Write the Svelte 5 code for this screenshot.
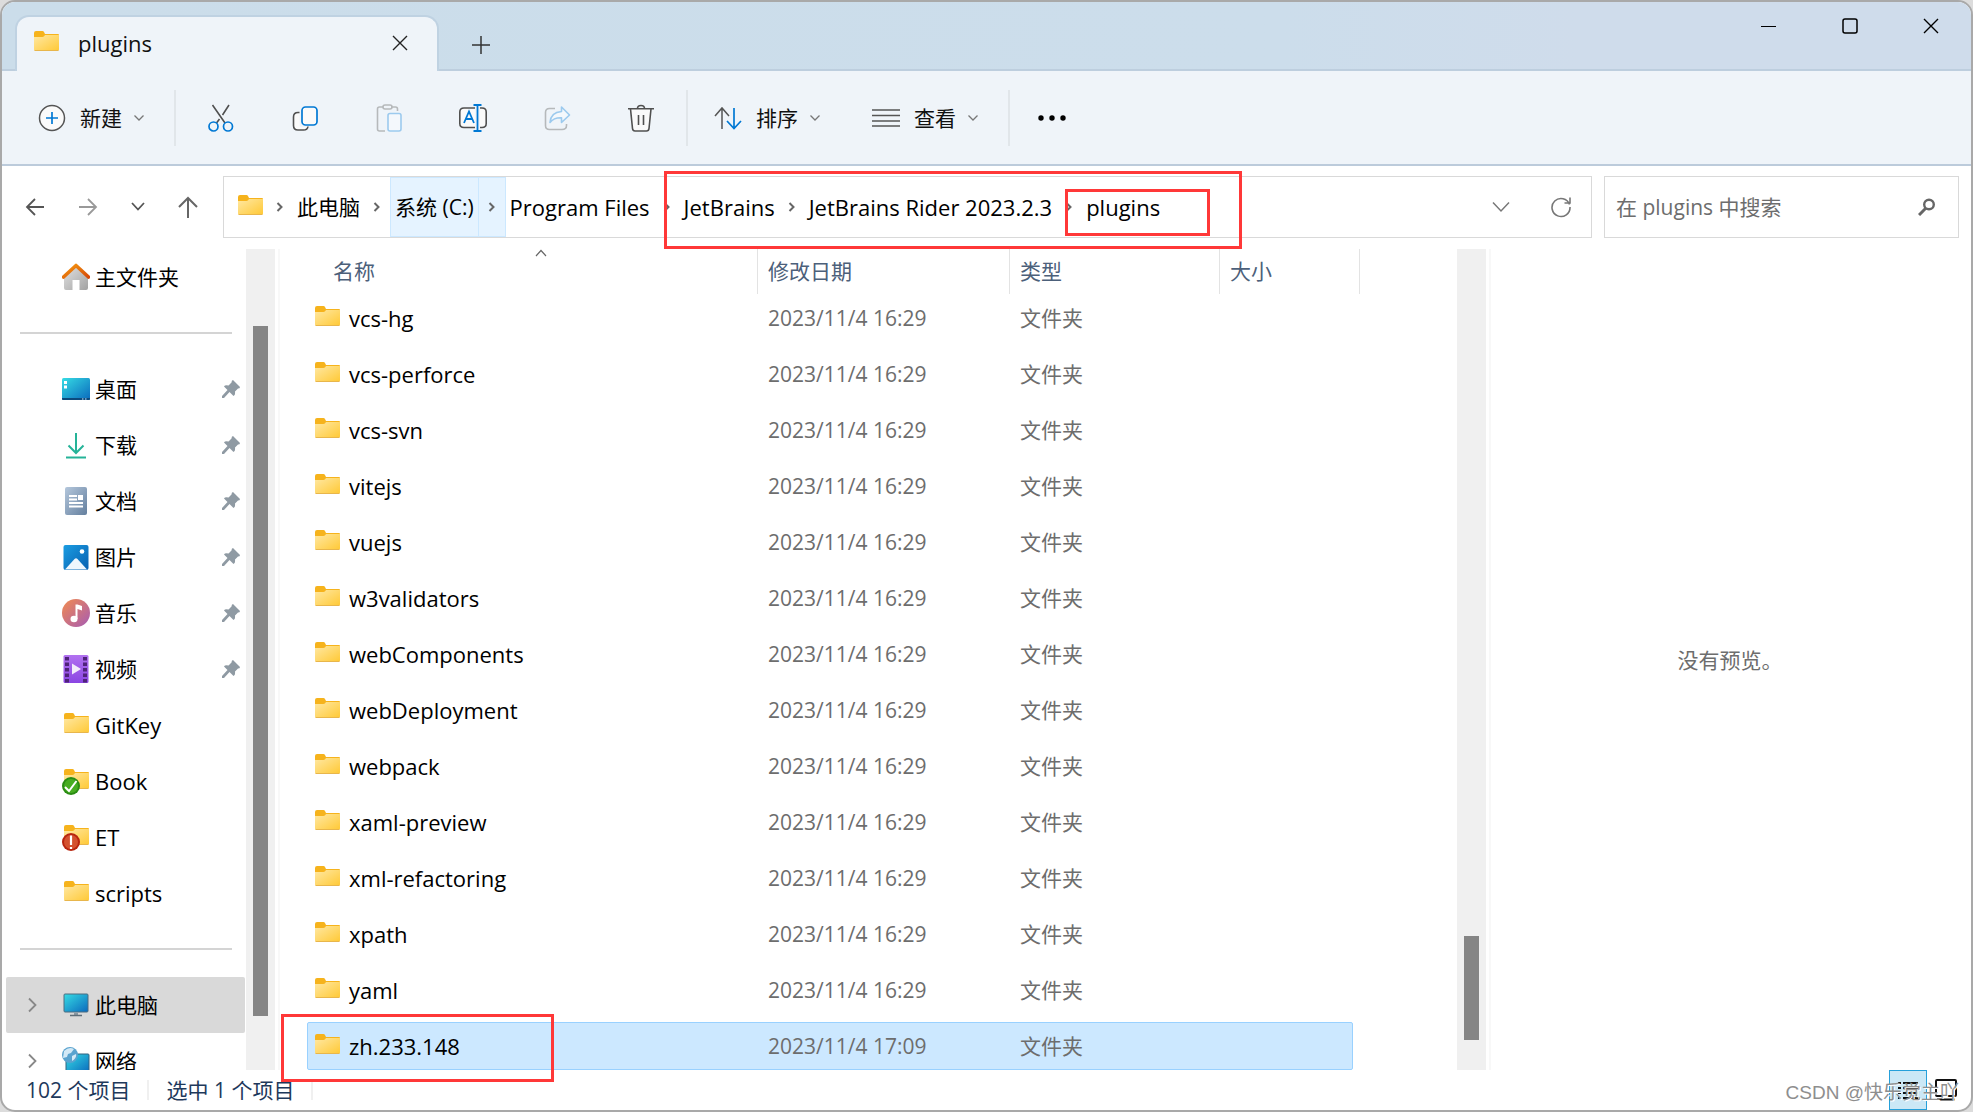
<script>
  let search = $state('');
  let selected = $state('zh.233.148');

  const path = ['JetBrains', 'JetBrains Rider 2023.2.3', 'plugins'];

  const quickAccess = [
    { label: '桌面', icon: 'desktop', pinned: true },
    { label: '下载', icon: 'download', pinned: true },
    { label: '文档', icon: 'document', pinned: true },
    { label: '图片', icon: 'picture', pinned: true },
    { label: '音乐', icon: 'music', pinned: true },
    { label: '视频', icon: 'video', pinned: true },
    { label: 'GitKey', icon: 'folder' },
    { label: 'Book', icon: 'folder-ok' },
    { label: 'ET', icon: 'folder-error' },
    { label: 'scripts', icon: 'folder' }
  ];

  const names = [
    'vcs-hg', 'vcs-perforce', 'vcs-svn', 'vitejs', 'vuejs', 'w3validators', 'webComponents',
    'webDeployment', 'webpack', 'xaml-preview', 'xml-refactoring', 'xpath', 'yaml'
  ];
  const files = [
    ...names.map((name) => ({ name, date: '2023/11/4 16:29' })),
    { name: 'zh.233.148', date: '2023/11/4 17:09' }
  ];
</script>

{#snippet folder()}
  <svg class="folder" width="25" height="20" viewBox="0 0 25 20">
    <path d="M0 2q0-2 2-2h6.500q1 0 1.500 1l1 2h13q1 0 1 1v4H0z" fill="#f6b31c" />
    <path d="M0 6h8.500q1.500 0 2.500-2h14v14.500q0 1-1 1H1q-1 0-1-1z" fill="url(#folder-fill)" />
    <path d="M.5 19.500h24" stroke="#e8b64c" stroke-width="1" />
  </svg>
{/snippet}

{#snippet crumbArrow()}
  <svg class="crumb-arrow" width="8" height="12" viewBox="0 0 8 12">
    <path d="M1.500 2 5.500 6l-4 4" fill="none" stroke="#666" stroke-width="2" />
  </svg>
{/snippet}

{#snippet chevron()}
  <svg width="12" height="8" viewBox="0 0 12 8">
    <path d="m1.500 1.500 4.500 4.500 4.500-4.500" fill="none" stroke="#777" stroke-width="1.300" />
  </svg>
{/snippet}

{#snippet sideIcon(name)}
  <span class="side-icon">
    {#if name.startsWith('folder')}
      {@render folder()}
      {#if name === 'folder-ok'}
        <svg class="badge" width="18" height="18" viewBox="0 0 18 18">
          <circle cx="9" cy="9" r="9" fill="#2a8c13" />
          <circle cx="9" cy="9" r="7" fill="#47ad21" />
          <path d="m3 10 4 4L14.500 4" fill="none" stroke="#fff" stroke-width="2" />
        </svg>
      {:else if name === 'folder-error'}
        <svg class="badge" width="18" height="18" viewBox="0 0 18 18">
          <circle cx="9" cy="9" r="9" fill="#b8250f" />
          <circle cx="9" cy="9" r="7" fill="#d4512f" />
          <path d="M9 2.500v9.500M9 14v2" stroke="#fff" stroke-width="2.200" />
        </svg>
      {/if}
    {:else if name === 'home'}
      <svg width="28" height="28" viewBox="0 0 28 28">
        <path d="M2 13 14 3l12 10v12q0 2-2 2h-6.500V17h-7v10H4q-2 0-2-2z" fill="url(#home-wall)" />
        <path d="M1.500 14 14 2.500 26.500 14" fill="none" stroke="url(#home-roof)" stroke-width="3.600" stroke-linecap="round" stroke-linejoin="round" />
      </svg>
    {:else if name === 'desktop'}
      <svg width="28" height="28" viewBox="0 0 28 28">
        <rect y="3" width="28" height="22" rx="1.500" fill="url(#screen)" />
        <path d="M0 23h28v1q0 1-1 1H1q-1 0-1-1z" fill="#0c4a7c" />
        <path d="M2 6h3v3H2zM2 10.500h3v3H2z" fill="#fff" />
        <path d="M20 24h1.500M23 24h1.500" stroke="#cfe8ff" />
      </svg>
    {:else if name === 'download'}
      <svg width="28" height="28" viewBox="0 0 28 28">
        <path d="M14 2v20M6.500 14.500 14 22l7.500-7.500M4 26.500h20" fill="none" stroke="#25b398" stroke-width="2" />
      </svg>
    {:else if name === 'document'}
      <svg width="28" height="28" viewBox="0 0 28 28">
        <rect x="3" width="22" height="28" rx="2" fill="url(#doc-fill)" />
        <path d="M7 9h8M7 12.500h8M7 16h14M7 19.500h14" stroke="#fff" stroke-width="1.800" />
        <path d="M16 8h5v5h-5z" fill="#fff" />
      </svg>
    {:else if name === 'picture'}
      <svg width="28" height="28" viewBox="0 0 28 28">
        <rect x="1.500" y="2" width="25" height="25" rx="2" fill="url(#picture-fill)" />
        <path d="M3 26.500 12.500 16q1.500-1.500 3 0L25 26.500z" fill="#eef6fd" />
        <circle cx="20" cy="8.500" r="2.300" fill="#fff" />
      </svg>
    {:else if name === 'music'}
      <svg width="28" height="28" viewBox="0 0 28 28">
        <circle cx="14" cy="14" r="14" fill="url(#music-fill)" />
        <ellipse cx="12" cy="20" rx="3.500" ry="3.200" fill="#fff" />
        <path d="M13.500 20V5.500h2l4.500 1.500v4.500l-4.500-1.500V20z" fill="#fff" />
      </svg>
    {:else if name === 'video'}
      <svg width="28" height="28" viewBox="0 0 28 28">
        <rect x="1.500" width="25" height="28" rx="1.500" fill="url(#video-fill)" />
        <path d="M5 2v26M23 2v26" stroke="#4f2379" stroke-width="4" stroke-dasharray="3.500 2" />
        <path d="M10 8.500v11l9-5.500z" fill="#f3ecfb" />
      </svg>
    {:else if name === 'pc'}
      <svg width="28" height="28" viewBox="0 0 28 28">
        <rect x="2" y="3" width="24" height="18" rx="1" fill="url(#screen)" stroke="#4d6d80" />
        <path d="M12 21.500h4V24h-4z" fill="#8a98a2" />
        <path d="M8 24.500h12" stroke="#5f6e78" stroke-width="1.500" />
      </svg>
    {:else if name === 'network'}
      <svg width="28" height="28" viewBox="0 0 28 28">
        <rect x="4" y="7" width="23" height="19" rx="1" fill="url(#screen)" stroke="#33627f" />
        <circle cx="8" cy="8" r="8" fill="#5aa3cf" />
        <path d="M2 4q5-5 10-2l-3 4-3 1-1 3-4 1zM10 9l4-2q1 4-4 7z" fill="#d3e9f6" />
      </svg>
    {/if}
  </span>
{/snippet}

<svg class="defs" width="0" height="0" aria-hidden="true">
  <defs>
    <linearGradient id="folder-fill" x1="0" y1="0" x2="1" y2="1">
      <stop offset="0" stop-color="#ffe8a3" /><stop offset="1" stop-color="#ffc936" />
    </linearGradient>
    <linearGradient id="screen" x1="0" y1="0" x2="1" y2="1">
      <stop offset="0" stop-color="#36dce4" /><stop offset="1" stop-color="#0a69bd" />
    </linearGradient>
    <linearGradient id="home-wall" x1="0" y1="0" x2="1" y2="1">
      <stop offset="0" stop-color="#e2e2e2" /><stop offset="1" stop-color="#a2a2a2" />
    </linearGradient>
    <linearGradient id="home-roof" x1="0" y1="0" x2="1" y2="1">
      <stop offset="0" stop-color="#f59a10" /><stop offset="1" stop-color="#d64908" />
    </linearGradient>
    <linearGradient id="doc-fill" x1="0" y1="0" x2="1" y2="1">
      <stop offset="0" stop-color="#b4c7dc" /><stop offset="1" stop-color="#647f9e" />
    </linearGradient>
    <linearGradient id="picture-fill" x1="0" y1="0" x2="1" y2="1">
      <stop offset="0" stop-color="#1b9de2" /><stop offset="1" stop-color="#075fb0" />
    </linearGradient>
    <linearGradient id="music-fill" x1="0" y1="0" x2="1" y2="1">
      <stop offset="0" stop-color="#f28b4f" /><stop offset="1" stop-color="#a65bb4" />
    </linearGradient>
    <linearGradient id="video-fill" x1="0" y1="0" x2="0" y2="1">
      <stop offset="0" stop-color="#b272f0" /><stop offset="1" stop-color="#8a45e2" />
    </linearGradient>
  </defs>
</svg>

<div class="window">
  <header class="titlebar">
    <div class="tab">
      {@render folder()}
      <span class="tab-title">plugins</span>
      <button class="tab-close" aria-label="关闭标签页">
        <svg width="16" height="16" viewBox="0 0 16 16"><path d="m1 1 14 14M15 1 1 15" stroke="#222" stroke-width="1.400" /></svg>
      </button>
    </div>
    <button class="new-tab" aria-label="新标签页">
      <svg width="18" height="18" viewBox="0 0 18 18"><path d="M9 0v18M0 9h18" stroke="#333" stroke-width="1.500" /></svg>
    </button>
    <div class="window-controls">
      <button aria-label="最小化">
        <svg width="16" height="16" viewBox="0 0 16 16"><path d="M0 8.500h15" stroke="#000" /></svg>
      </button>
      <button aria-label="最大化">
        <svg width="16" height="16" viewBox="0 0 16 16"><rect x="1" y="1" width="14" height="14" rx="2" fill="none" stroke="#000" stroke-width="1.500" /></svg>
      </button>
      <button aria-label="关闭">
        <svg width="16" height="16" viewBox="0 0 16 16"><path d="m1 1 14 14M15 1 1 15" stroke="#000" stroke-width="1.400" /></svg>
      </button>
    </div>
  </header>

  <div class="toolbar">
    <button class="text-tool new">
      <svg width="28" height="28" viewBox="0 0 28 28">
        <circle cx="14" cy="14" r="12.500" fill="#fafafa" stroke="#555" stroke-width="1.500" />
        <path d="M14 8v12M8 14h12" stroke="#0078d4" stroke-width="1.700" />
      </svg>
      新建 {@render chevron()}
    </button>
    <span class="divider"></span>
    <div class="icon-tools">
      <button aria-label="剪切">
        <svg width="28" height="28" viewBox="0 0 28 28" fill="none">
          <path d="M5.500 1 18 19M22 1 15.500 11M12.500 15 9.500 19" stroke="#505050" stroke-width="1.600" />
          <circle cx="6.500" cy="22.500" r="4.500" stroke="#0078d4" stroke-width="1.700" />
          <circle cx="21" cy="22.500" r="4.500" stroke="#0078d4" stroke-width="1.700" />
        </svg>
      </button>
      <button aria-label="复制">
        <svg width="28" height="28" viewBox="0 0 28 28" fill="none">
          <path d="M8.500 8.500H7q-4.500 0-4.500 4.500v8.500q0 4.500 4.500 4.500h5.500q3.500 0 4-3H10q-1.500 0-1.500-1.500z" fill="#fafafa" />
          <path d="M8.500 8.500H7q-4.500 0-4.500 4.500v8.500q0 4.500 4.500 4.500h5.500q4 0 4.500-3.500" stroke="#505050" stroke-width="1.600" />
          <rect x="11" y="3" width="15" height="18" rx="3.500" fill="#fafafa" stroke="#0078d4" stroke-width="1.700" />
        </svg>
      </button>
      <button aria-label="粘贴">
        <svg width="28" height="28" viewBox="0 0 28 28" fill="none">
          <path d="M8 3H4.500q-2 0-2 2v20q0 2 2 2H10M16 3h4.500q2 0 2 2v2" stroke="#b6b9bb" stroke-width="1.600" />
          <rect x="8" y="1" width="9" height="4" rx="2" stroke="#b6b9bb" stroke-width="1.600" />
          <rect x="13" y="9.500" width="13" height="17.500" rx="2" fill="#f4f8fc" stroke="#9ccaee" stroke-width="1.600" />
        </svg>
      </button>
      <button aria-label="重命名">
        <svg width="28" height="28" viewBox="0 0 28 28" fill="none">
          <path d="M16 4H5Q.8 4 .8 8v11.500q0 4 4.200 4h11M21 4h2q4.200 0 4.200 4v11.500q0 4-4.200 4h-2" fill="#fafafa" stroke="#505050" stroke-width="1.600" />
          <path d="m5 19 5-11.500L15 19M7 15h6M18.500 1v26M14.500 1h8M14.500 27h8" stroke="#0078d4" stroke-width="1.800" />
        </svg>
      </button>
      <button aria-label="共享">
        <svg width="28" height="28" viewBox="0 0 28 28" fill="none">
          <path d="M12 4.500H6.500Q2.500 4.500 2.500 8.500v13q0 4 4 4H19q4.500 0 4.500-4V20" stroke="#b6b9bb" stroke-width="1.600" />
          <path d="M18.500 3v4.500C11 8 7.500 12 7 18.500c3-4 6-5 11.500-4.800V18.500L26.500 11z" fill="#f4f8fc" stroke="#9ccaee" stroke-width="1.600" stroke-linejoin="round" />
        </svg>
      </button>
      <button aria-label="删除">
        <svg width="28" height="28" viewBox="0 0 28 28" fill="none">
          <path d="M3.500 5 5.500 24.500q.3 2.500 2.500 2.500h11.500q2.200 0 2.500-2.500L24 5z" fill="#fafafa" />
          <path d="M1 4.800h26M10.500 4.500q0-3 3.500-3t3.500 3M3.500 5 5.500 24.500q.3 2.500 2.500 2.500h11.500q2.200 0 2.500-2.500L24 5M11.500 11v10M16.500 11v10" stroke="#505050" stroke-width="1.600" />
        </svg>
      </button>
    </div>
    <span class="divider"></span>
    <button class="text-tool">
      <svg width="28" height="28" viewBox="0 0 28 28" fill="none" stroke-width="1.500">
        <path d="M8 25V4M1 12 8 4l7 8" stroke="#555" />
        <path d="M20 4v20M13 17l7 7.500 7-7.500" stroke="#0078d4" stroke-width="1.700" />
      </svg>
      排序 {@render chevron()}
    </button>
    <button class="text-tool view">
      <svg width="28" height="28" viewBox="0 0 28 28"><path d="M0 6h28M0 11.500h28M0 17h28M0 22h28" stroke="#555" stroke-width="1.600" /></svg>
      查看 {@render chevron()}
    </button>
    <span class="divider"></span>
    <button class="more" aria-label="查看更多">
      <svg width="28" height="8" viewBox="0 0 28 8"><circle cx="3" cy="4" r="2.700" /><circle cx="14" cy="4" r="2.700" /><circle cx="25" cy="4" r="2.700" /></svg>
    </button>
  </div>

  <div class="address-row">
    <nav class="history">
      <button aria-label="后退">
        <svg width="20" height="20" viewBox="0 0 20 20"><path d="M19 10H2M10 2l-8 8 8 8" fill="none" stroke="#555" stroke-width="1.800" /></svg>
      </button>
      <button aria-label="前进">
        <svg width="20" height="20" viewBox="0 0 20 20"><path d="M1 10h17M10 2l8 8-8 8" fill="none" stroke="#999" stroke-width="1.800" /></svg>
      </button>
      <button aria-label="最近浏览的位置">
        <svg width="14" height="20" viewBox="0 0 14 20"><path d="m1 6 6 6.500L13 6" fill="none" stroke="#555" stroke-width="1.800" /></svg>
      </button>
      <button aria-label="上移">
        <svg width="20" height="22" viewBox="0 0 20 22"><path d="M10 22V2M1 11l9-9 9 9" fill="none" stroke="#666" stroke-width="2" /></svg>
      </button>
    </nav>
    <div class="address">
      {@render folder()}
      {@render crumbArrow()}
      <button class="crumb cjk">此电脑</button>
      {@render crumbArrow()}
      <span class="hovered">
        <button class="crumb cjk">系统 (C:)</button>
        <span class="hovered-arrow">{@render crumbArrow()}</span>
      </span>
      <button class="crumb">Program Files</button>
      {#each path as part}
        {@render crumbArrow()}
        <button class="crumb">{part}</button>
      {/each}
      <div class="address-end">
        <button aria-label="以前的位置">
          <svg width="18" height="12" viewBox="0 0 18 12"><path d="m1 1.500 8 8.500 8-8.500" fill="none" stroke="#777" stroke-width="1.500" /></svg>
        </button>
        <button aria-label="刷新">
          <svg width="22" height="22" viewBox="0 0 22 22"><path d="M19.500 8.500A9 9 0 1 0 20 11M20 1.500v5.500h-5.500" fill="none" stroke="#777" stroke-width="1.600" /></svg>
        </button>
      </div>
    </div>
    <label class="search">
      <input type="text" bind:value={search} placeholder="在 plugins 中搜索" aria-label="搜索" />
      <svg width="18" height="18" viewBox="0 0 18 18" fill="none" stroke="#666"><circle cx="11" cy="6.500" r="4.800" stroke-width="2.400" /><path d="m8 10-7 7" stroke-width="3" /></svg>
    </label>
  </div>

  <div class="content">
    <aside>
      <a class="side-item" href="#home">{@render sideIcon('home')}主文件夹</a>
      <hr />
      {#each quickAccess as item}
        <a class="side-item" class:latin={item.icon.startsWith('folder')} href="#{item.label}">
          {@render sideIcon(item.icon)}{item.label}
          {#if item.pinned}
            <svg class="pin" width="18" height="18" viewBox="0 0 18 18">
              <path d="M11 0 18 7q0 1.500-2 1.500l-3 3Q13.500 15 11.500 16L7.500 12 2 18 0 18v-2l5.500-6L2 6.500Q3 4.500 6.500 5.500l3-3Q9.500 0 11 0z" fill="#8f9aa3" />
            </svg>
          {/if}
        </a>
      {/each}
      <hr />
      <a class="side-item tree current" href="#pc">
        <svg class="expand" width="9" height="16" viewBox="0 0 9 16"><path d="m1 1.500 6.500 6.500L1 14.500" fill="none" stroke="#888" stroke-width="1.800" /></svg>
        {@render sideIcon('pc')}此电脑
      </a>
      <a class="side-item tree" href="#network">
        <svg class="expand" width="9" height="16" viewBox="0 0 9 16"><path d="m1 1.500 6.500 6.500L1 14.500" fill="none" stroke="#888" stroke-width="1.800" /></svg>
        {@render sideIcon('network')}网络
      </a>
    </aside>
    <div class="scrollbar"><div class="thumb side-thumb"></div></div>

    <main>
      <table>
        <thead>
          <tr>
            <th>
              名称
              <svg class="sort" width="12" height="8" viewBox="0 0 12 8"><path d="m1 7 5-5.500L11 7" fill="none" stroke="#666" stroke-width="1.200" /></svg>
            </th>
            <th>修改日期</th>
            <th>类型</th>
            <th>大小</th>
          </tr>
        </thead>
        <tbody>
          {#each files as file}
            <tr class:selected={file.name === selected} onclick={() => (selected = file.name)}>
              <td class="name">{@render folder()}{file.name}</td>
              <td>{file.date}</td>
              <td>文件夹</td>
              <td></td>
            </tr>
          {/each}
        </tbody>
      </table>
    </main>
    <div class="scrollbar"><div class="thumb list-thumb"></div></div>

    <section class="preview">没有预览。</section>
  </div>

  <footer>
    <span>102 个项目</span>
    <span>选中 1 个项目</span>
    <div class="view-modes">
      <button class="active" aria-label="详细信息">
        <svg width="24" height="24" viewBox="0 0 24 24"><path d="M2 5h3M7 5h15M2 10h3M7 10h15M2 15h3M7 15h15M2 20h3M7 20h15" stroke="#111" stroke-width="2" /></svg>
      </button>
      <button aria-label="大缩略图">
        <svg width="24" height="24" viewBox="0 0 24 24"><rect x="2" y="2" width="20" height="16" rx="1" fill="none" stroke="#111" stroke-width="2" /><path d="M3 21.500h18" stroke="#111" stroke-width="2" /></svg>
      </button>
    </div>
  </footer>

  <div class="mark mark-path"></div>
  <div class="mark mark-plugins"></div>
  <div class="mark mark-file"></div>
  <div class="watermark">CSDN @快乐觉主吖</div>
</div>

<style>
  :global(body) {
    background: #dcdcdc;
  }

  .defs {
    position: absolute;
  }

  .window {
    position: relative;
    display: flex;
    flex-direction: column;
    box-sizing: border-box;
    height: 100vh;
    border: 2px solid #a9a9a9;
    border-radius: 15px;
    overflow: hidden;
    background: #fff;
    font-family: 'Open Sans', 'Noto Sans CJK SC', sans-serif;
    font-size: 21px;
    line-height: 28px;
    color: #111;
  }

  svg {
    display: block;
    flex-shrink: 0;
  }

  button {
    display: flex;
    align-items: center;
    justify-content: center;
    padding: 0;
    border: none;
    background: none;
    font: inherit;
    color: inherit;
    white-space: nowrap;
  }

  .folder {
    margin-bottom: 4px;
  }

  /* title bar */
  .titlebar {
    display: flex;
    align-items: flex-end;
    height: 69px;
    flex-shrink: 0;
    box-sizing: border-box;
    border-bottom: 2px solid #bdcede;
    background: linear-gradient(90deg, #cbddea, #ccddeb 65%, #cfdceb 80%);
  }

  .tab {
    display: flex;
    align-items: center;
    box-sizing: border-box;
    width: 424px;
    height: 56px;
    margin: 0 0 -2px 13px;
    padding: 0 21px 2px 17px;
    border: 2px solid #bfd2e2;
    border-bottom: none;
    border-radius: 14px 14px 0 0;
    background: #eff4f9;
    font-size: 22px;
  }

  .tab-title {
    margin-left: 19px;
  }

  .tab-close {
    width: 32px;
    height: 32px;
    margin-left: auto;
  }

  .new-tab {
    width: 48px;
    height: 48px;
    margin-left: 18px;
  }

  .window-controls {
    display: flex;
    align-self: flex-start;
    margin-left: auto;
  }

  .window-controls button {
    width: 81px;
    height: 48px;
  }

  /* command bar */
  .toolbar {
    display: flex;
    align-items: center;
    height: 95px;
    flex-shrink: 0;
    box-sizing: border-box;
    border-bottom: 2px solid #bccbdb;
    background: #eff4f9;
  }

  .text-tool {
    gap: 14px;
    margin-left: 26px;
  }

  .text-tool.new {
    margin: 0 29px 0 36px;
  }

  .text-tool.view {
    margin: 0 29px 0 51px;
  }

  .text-tool svg:last-child {
    margin-left: -3px;
  }

  .divider {
    width: 2px;
    height: 56px;
    background: #e1e6ea;
  }

  .icon-tools {
    display: flex;
    padding: 0 3px;
  }

  .icon-tools button {
    width: 84px;
    height: 56px;
  }

  .more {
    width: 84px;
    height: 56px;
  }

  /* address bar */
  .address-row {
    display: flex;
    gap: 12px;
    height: 62px;
    flex-shrink: 0;
    padding: 10px 12px 11px 23px;
  }

  .history {
    display: flex;
    align-items: center;
    gap: 33px;
    width: 186px;
  }

  .address,
  .search {
    display: flex;
    align-items: center;
    box-sizing: border-box;
    border: 1px solid #d9d9d9;
    background: #fff;
  }

  .address {
    flex: 1;
    padding-left: 14px;
    font-size: 22px;
    color: #000;
  }

  .crumb-arrow {
    margin: 0 13px;
  }

  .cjk {
    font-size: 21px;
  }

  .hovered {
    display: flex;
    align-self: stretch;
    margin-left: -4px;
    border: 1px solid #cce8ff;
    background: #e5f3ff;
  }

  .hovered .crumb {
    padding: 0 4px;
  }

  .hovered .crumb-arrow {
    margin: 0 9px;
  }

  .hovered + .crumb {
    padding-left: 4px;
  }

  .hovered-arrow {
    display: flex;
    align-items: center;
    border-left: 1px solid #cce8ff;
  }

  .address-end {
    display: flex;
    margin-left: auto;
  }

  .address-end button {
    width: 60px;
    height: 60px;
  }

  .search {
    width: 355px;
    padding: 0 22px 0 11px;
  }

  .search input {
    flex: 1;
    min-width: 0;
    padding: 0;
    border: none;
    outline: none;
    background: none;
    font: inherit;
    color: #111;
  }

  .search input::placeholder {
    color: #6d6d6d;
    opacity: 1;
  }

  /* panes */
  .content {
    display: flex;
    flex: 1;
    min-height: 0;
  }

  aside {
    width: 244px;
    flex-shrink: 0;
    box-sizing: border-box;
    padding: 0 1px 0 4px;
    overflow: hidden;
  }

  .side-item {
    display: flex;
    align-items: center;
    height: 56px;
    box-sizing: border-box;
    padding: 0 5px 0 56px;
    color: #000;
    text-decoration: none;
  }

  .side-item.latin {
    font-size: 22px;
  }

  .side-item.tree {
    padding-left: 22px;
  }

  .side-item.current {
    border-radius: 2px;
    background: #d9d9d9;
  }

  .expand {
    margin-right: 25px;
  }

  .side-icon {
    position: relative;
    display: flex;
    align-items: center;
    justify-content: center;
    width: 28px;
    height: 28px;
    margin-right: 5px;
  }

  .badge {
    position: absolute;
    left: 0;
    bottom: 0;
  }

  .pin {
    margin-left: auto;
  }

  hr {
    height: 2px;
    margin: 27px 13px 27px 14px;
    border: none;
    background: #d4d4d4;
  }

  .scrollbar {
    position: relative;
    width: 29px;
    flex-shrink: 0;
    margin-right: 3px;
    background: #f0f0f0;
    box-shadow: 3px 0 0 #fff, 5px 0 0 #f8f8f8;
  }

  .thumb {
    position: absolute;
    left: 7px;
    right: 7px;
    background: #858585;
  }

  .side-thumb {
    top: 9.4%;
    height: 84%;
  }

  .list-thumb {
    top: 83.7%;
    height: 12.7%;
  }

  main {
    flex: 1;
    min-width: 0;
    overflow: hidden;
    padding: 0 98px 0 29px;
  }

  table,
  thead,
  tbody {
    display: block;
  }

  tr {
    display: grid;
    grid-template-columns: 451px 252px 210px 140px;
  }

  th {
    position: relative;
    height: 45px;
    box-sizing: border-box;
    padding: 0 0 0 10px;
    border-right: 1px solid #e3e3e3;
    font-weight: 400;
    text-align: left;
    line-height: 45px;
    color: #4c607a;
  }

  th:first-child {
    padding-left: 26px;
  }

  .sort {
    position: absolute;
    top: 0;
    left: 228px;
  }

  tbody tr {
    height: 46px;
    margin: 0 6px 8px 0;
    border: 1px solid transparent;
    border-radius: 2px;
  }

  tbody tr.selected {
    margin-bottom: 0;
    border-color: #99d1ff;
    background: #cce8ff;
  }

  td {
    padding: 0 0 0 9px;
    line-height: 46px;
    color: #6d6d6d;
  }

  td.name {
    display: flex;
    align-items: center;
    gap: 9px;
    padding-left: 7px;
    font-size: 22px;
    color: #000;
  }

  .preview {
    display: flex;
    align-items: center;
    justify-content: center;
    width: 482px;
    flex-shrink: 0;
    color: #6d6d6d;
  }

  /* status bar */
  footer {
    display: flex;
    align-items: center;
    height: 40px;
    flex-shrink: 0;
    padding-left: 7px;
    color: #1e395b;
  }

  footer span {
    padding: 0 17px;
    border-right: 2px solid #f0f0f0;
    line-height: 20px;
  }

  .view-modes {
    display: flex;
    margin: 0 6px 0 auto;
  }

  .view-modes button {
    box-sizing: border-box;
    width: 38px;
    height: 40px;
  }

  .view-modes .active {
    border: 1px solid #26a0da;
    background: #cbe8f6;
  }

  /* marks drawn over the window */
  .mark {
    position: absolute;
    box-sizing: border-box;
    border: 3px solid #ff3838;
    pointer-events: none;
  }

  .mark-path {
    left: 662px;
    top: 169px;
    width: 578px;
    height: 78px;
  }

  .mark-plugins {
    left: 1063px;
    top: 187px;
    width: 145px;
    height: 47px;
  }

  .mark-file {
    left: 279px;
    bottom: 28px;
    width: 273px;
    height: 68px;
  }

  .watermark {
    position: absolute;
    right: 12px;
    bottom: 3px;
    font-family: 'Liberation Sans', 'Noto Sans CJK SC', sans-serif;
    font-size: 19px;
    color: #8e8e8e;
    text-shadow: 1px 1px 0 #fff;
  }
</style>
